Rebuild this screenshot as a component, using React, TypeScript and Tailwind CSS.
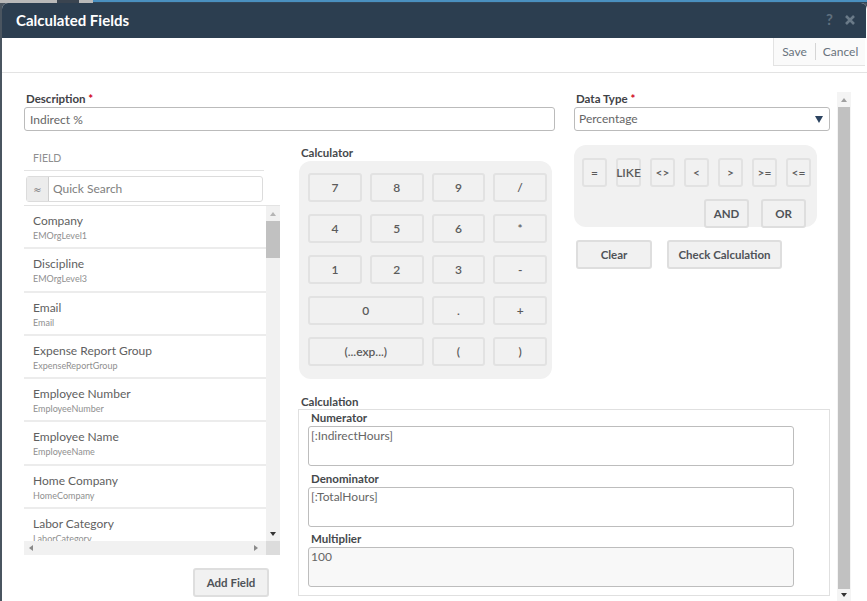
import React from 'react';

const fields = [
  ['Company', 'EMOrgLevel1'],
  ['Discipline', 'EMOrgLevel3'],
  ['Email', 'Email'],
  ['Expense Report Group', 'ExpenseReportGroup'],
  ['Employee Number', 'EmployeeNumber'],
  ['Employee Name', 'EmployeeName'],
  ['Home Company', 'HomeCompany'],
  ['Labor Category', 'LaborCategory'],
];

const keyClass =
  'h-[29px] flex items-center justify-center rounded-[3px] border-2 border-[#e2e2e2] bg-[#f1f1f1] text-[12px] font-semibold text-[#5b5b5b]';
const btnClass =
  'h-[29px] flex items-center justify-center rounded-[3px] border-2 border-[#dedede] bg-[#f1f1f1] text-[11.5px] font-bold text-[#4f5358]';

function Triangle({ dir, color = '#6f6f6f' }: { dir: 'up' | 'down' | 'left' | 'right'; color?: string }) {
  const points = {
    up: '1,6 4,2 7,6',
    down: '1,2 7,2 4,6',
    left: '6,1 6,7 2,4',
    right: '2,1 2,7 6,4',
  }[dir];
  return (
    <svg width="8" height="8" viewBox="0 0 8 8">
      <polygon points={points} fill={color} />
    </svg>
  );
}

function Area({ label, value, filled }: { label: string; value: string; filled?: boolean }) {
  return (
    <div className="flex flex-col">
      <label className="pl-[3px] text-[11.5px] leading-[14px] font-bold text-[#45484b]">{label}</label>
      <div
        className={`mt-[1px] h-[40px] w-[486px] rounded-[3px] border border-[#bdbdbd] px-[2px] py-[1px] text-[12px] leading-[16px] text-[#666] ${
          filled ? 'bg-[#f8f8f8]' : 'bg-white'
        }`}
      >
        {value}
      </div>
    </div>
  );
}

export default function App() {
  return (
    <div className="relative w-[867px] h-[601px] overflow-hidden bg-[#4a5560] pl-[2px] font-['Lato','Noto_Sans',sans-serif]">
      <div className="-ml-[2px] h-[3px] flex">
        <div className="w-[57px] bg-[#b9b9b9]" />
        <div className="w-[22px] bg-[#3a4450]" />
        <div className="w-[14px] bg-[#b9b9b9]" />
        <div className="flex-1 bg-[#4a90c0] border-b border-[#33475a]" />
      </div>
      <div className="h-[598px] w-[865px] bg-white rounded-t-[6px] overflow-hidden flex flex-col">
        <header className="h-[35px] shrink-0 bg-[#2c3e50] flex items-center justify-between pl-[14px] pr-[10px] mr-[1px]">
          <h1 className="text-[15px] font-bold text-white">Calculated Fields</h1>
          <div className="flex items-center gap-[11px] text-[#5f6f7e]">
            <span className="text-[15px] font-bold -mt-[3px]">?</span>
            <svg width="12" height="12" viewBox="0 0 12 12" className="-mt-[1px]">
              <path d="M2 2 L10 10 M10 2 L2 10" stroke="#6a7a88" strokeWidth="2.6" />
            </svg>
          </div>
        </header>

        <div className="h-[35px] shrink-0 border-b border-[#e3e3e3] flex justify-end items-start">
          <div className="h-[28px] w-[92px] mr-[2px] bg-[#fafafa] border-l border-b border-[#e3e3e3] flex items-center text-[12px] text-[#69737d]">
            <span className="w-[42px] text-center border-r border-[#d5d5d5] leading-[17px]">Save</span>
            <span className="flex-1 text-center">Cancel</span>
          </div>
        </div>

        <div className="flex-1 flex min-h-0 pt-[19px]">
          <main className="w-[828px] shrink-0 pl-[22px]">
            <div className="flex gap-[19px]">
              <div className="w-[531px]">
                <label className="block pl-[2px] text-[11.5px] leading-[14px] font-bold text-[#3f4246]">
                  Description <span className="text-[#d0021b]">*</span>
                </label>
                <div className="mt-[1px] h-[24px] rounded-[3px] border border-[#bbb] px-[5px] text-[12px] leading-[23px] text-[#666]">
                  Indirect %
                </div>
              </div>
              <div className="w-[256px]">
                <label className="block pl-[2px] text-[11.5px] leading-[14px] font-bold text-[#3f4246]">
                  Data Type <span className="text-[#d0021b]">*</span>
                </label>
                <div className="mt-[1px] h-[24px] rounded-[3px] border border-[#bbb] pl-[4px] pr-[5px] flex items-center justify-between text-[12px] text-[#666]">
                  Percentage
                  <svg width="10" height="9" viewBox="0 0 10 9">
                    <polygon points="1,1 9,1 5,8" fill="#2c4360" />
                  </svg>
                </div>
              </div>
            </div>

            <div className="flex gap-[19px]">
              <section className="w-[256px] pt-[20px]">
                <div className="h-[20px] pl-[9px] text-[10.5px] leading-[14px] text-[#8f8f8f] border-b border-[#e3e3e3] w-[240px]">
                  FIELD
                </div>
                <div className="mt-[5px] ml-[2px] h-[26px] w-[237px] flex rounded-[3px] border border-[#dcdcdc]">
                  <div className="w-[22px] bg-[#ececec] border-r border-[#cfcfcf] flex items-center justify-center font-['DejaVu_Sans',sans-serif] text-[10px] text-[#777]">
                    ≈
                  </div>
                  <div className="pl-[4px] text-[12px] leading-[24px] text-[#808080]">Quick Search</div>
                </div>
                <div className="mt-[3px] border-t border-[#e3e3e3] w-[256px]">
                  <div className="flex h-[335px]">
                    <div className="w-[242px] overflow-hidden">
                      {fields.map(([name, code]) => (
                        <div key={code} className="h-[43.3px] pl-[9px] pt-[7px] border-b-2 border-[#ececec]">
                          <div className="text-[12px] leading-[16px] text-[#5f5f5f]">{name}</div>
                          <div className="text-[9px] leading-[14px] text-[#8f8f8f]">{code}</div>
                        </div>
                      ))}
                    </div>
                    <div className="w-[14px] bg-[#f1f1f1] flex flex-col items-center justify-between pb-[3px]">
                      <div className="w-full flex flex-col items-center">
                        <div className="h-[15px] flex items-center">
                          <Triangle dir="up" color="#b5b5b5" />
                        </div>
                        <div className="h-[37px] w-full bg-[#c1c1c1]" />
                      </div>
                      <Triangle dir="down" color="#333" />
                    </div>
                  </div>
                  <div className="h-[14px] bg-[#f1f1f1] flex items-center justify-between">
                    <div className="pl-[3px] flex">
                      <Triangle dir="left" color="#8a8a8a" />
                    </div>
                    <div className="flex">
                      <div className="pr-[6px] flex items-center">
                        <Triangle dir="right" color="#8a8a8a" />
                      </div>
                      <div className="w-[14px] h-[14px] bg-[#dcdcdc]" />
                    </div>
                  </div>
                </div>
                <div className={`${btnClass} mt-[13px] ml-[169px] w-[76px]`}>Add Field</div>
              </section>

              <section className="flex-1 pt-[15px]">
                <div className="flex">
                  <div>
                    <div className="pl-[2px] text-[11.5px] leading-[14px] font-bold text-[#45484b]">Calculator</div>
                    <div className="mt-[1px] w-[253px] h-[218px] rounded-[12px] bg-[#f1f1f1] pl-[9px] pr-[5px] pt-[12px] grid grid-cols-4 gap-x-[8px] gap-y-[12px] content-start">
                      {['7', '8', '9', '/', '4', '5', '6', '*', '1', '2', '3', '-'].map((k) => (
                        <div key={k} className={keyClass}>{k}</div>
                      ))}
                      <div className={`${keyClass} col-span-2`}>0</div>
                      <div className={keyClass}>.</div>
                      <div className={keyClass}>+</div>
                      <div className={`${keyClass} col-span-2`}>(...exp...)</div>
                      <div className={keyClass}>(</div>
                      <div className={keyClass}>)</div>
                    </div>
                  </div>

                  <div className="ml-[22px] -mt-[1px]">
                    <div className="w-[243px] h-[82px] rounded-[12px] bg-[#f1f1f1] pl-[8px] pt-[13px]">
                      <div className="flex gap-[9px]">
                        {['=', 'LIKE', '<>', '<', '>', '>=', '<='].map((k) => (
                          <div key={k} className={`${keyClass} w-[25px] h-[28px] text-[11.5px] whitespace-nowrap`}>{k}</div>
                        ))}
                      </div>
                      <div className="mt-[12px] ml-[122px] flex gap-[12px]">
                        <div className={`${btnClass} w-[45px]`}>AND</div>
                        <div className={`${btnClass} w-[45px]`}>OR</div>
                      </div>
                    </div>
                    <div className="mt-[13px] ml-[2px] flex gap-[15px]">
                      <div className={`${btnClass} w-[76px]`}>Clear</div>
                      <div className={`${btnClass} w-[115px]`}>Check Calculation</div>
                    </div>
                  </div>
                </div>

                <div className="mt-[16px]">
                  <div className="pl-[2px] text-[11.5px] leading-[14px] font-bold text-[#45484b]">Calculation</div>
                  <div className="-ml-[1px] w-[532px] h-[187px] border border-[#e0e0e0] pl-[9px] pt-[1px] flex flex-col gap-[5.5px]">
                    <Area label="Numerator" value="[:IndirectHours]" />
                    <Area label="Denominator" value="[:TotalHours]" />
                    <Area label="Multiplier" value="100" filled />
                  </div>
                </div>
              </section>
            </div>
          </main>

          <div className="w-[14px] ml-[7px] flex flex-col items-center bg-[#f4f4f4]">
            <div className="h-[15px] flex items-center">
              <Triangle dir="up" color="#a0a0a0" />
            </div>
            <div className="flex-1 w-[12px] bg-[#c1c1c1]" />
            <div className="h-[12px] flex items-center">
              <Triangle dir="down" color="#333" />
            </div>
          </div>
        </div>
      </div>
    </div>
  );
}
